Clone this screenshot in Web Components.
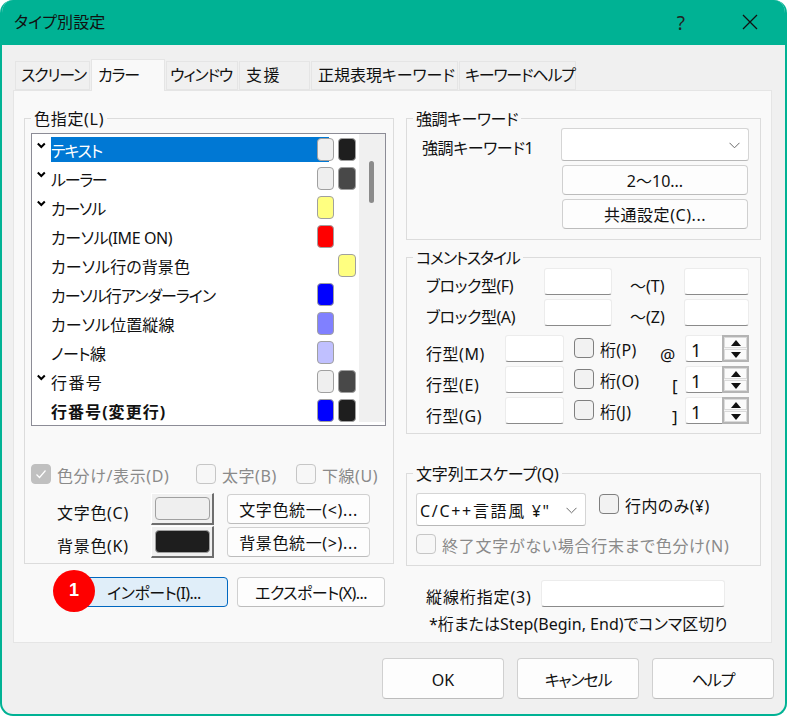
<!DOCTYPE html>
<html lang="ja">
<head>
<meta charset="utf-8">
<title>タイプ別設定</title>
<style>
  html, body { margin: 0; padding: 0; background: #fff; }
  body {
    font: 16px/20px "Noto Sans", "Noto Sans CJK JP", sans-serif;
    font-feature-settings: "palt";
    color: #111;
  }
</style>
</head>
<body>
<dlg-window heading="タイプ別設定">
  <tab-strip>
    <tab-item w="75" pad="5">スクリーン</tab-item>
    <tab-item w="74" pad="6" selected>カラー</tab-item>
    <tab-item w="72" pad="3">ウィンドウ</tab-item>
    <tab-item w="71" pad="6">支援</tab-item>
    <tab-item w="147" pad="6">正規表現キーワード</tab-item>
    <tab-item w="117" pad="5">キーワードヘルプ</tab-item>
  </tab-strip>
  <settings-page></settings-page>
  <push-button slot="footer" style="width:122px;height:41px">OK</push-button>
  <push-button slot="footer" style="width:122px;height:41px">キャンセル</push-button>
  <push-button slot="footer" style="width:122px;height:41px">ヘルプ</push-button>
</dlg-window>

<script>
// the original UI font has wide kanji and tight kana, so space each string to suit
function tuneSpacing(root) {
    const walker = document.createTreeWalker(root, NodeFilter.SHOW_TEXT);
    while (walker.nextNode()) {
        const text = walker.currentNode.nodeValue.trim();
        const parent = walker.currentNode.parentElement || root.host;
        if (!text || !parent || parent.tagName === 'STYLE') continue;
        const kanji = (text.match(/[\u4e00-\u9fff]/g) || []).length;
        const kana = (text.match(/[\u30a0-\u30ff]/g) || []).length;
        const extra = parseFloat(parent.getAttribute('ls') || 0);
        parent.style.letterSpacing = ((1.4 * kanji - 1.2 * kana) / text.length + extra).toFixed(2) + 'px';
    }
}

class Comp extends HTMLElement {
    constructor() {
        super();
        this.attachShadow({ mode: 'open' });
    }
    connectedCallback() {
        this.shadowRoot.innerHTML = this.render();
        tuneSpacing(this.shadowRoot);
        tuneSpacing(this);
    }
}

class DlgWindow extends Comp {
    render() {
        return `
        <style>
            :host {
                display: flex;
                flex-direction: column;
                box-sizing: border-box;
                width: 787px;
                height: 716px;
                background: #f0f0f0;
                border: solid #00b294;
                border-width: 0 2px 2px;
                border-radius: 13px;
                overflow: hidden;
            }
            .title {
                display: flex;
                align-items: center;
                height: 43px;
                padding: 0 0 2px 12px;
                flex: none;
                background: #00b294;
            }
            .title span { flex: 1; }
            .title b { font-weight: 400; font-size: 19px; margin-right: 57px; color: #222; padding-top: 2px; }
            .title svg { margin-right: 27px; }
            .body { padding: 14px 11px 0; }
            .footer {
                display: flex;
                justify-content: flex-end;
                gap: 13px;
                padding-top: 15px;
            }
        </style>
        <div class="title">
            <span>${this.getAttribute('heading')}</span>
            <b>?</b>
            <svg width="16" height="16" viewBox="0 0 16 16"><path d="M1 1L15 15M15 1L1 15" stroke="#111" stroke-width="1.3" fill="none"/></svg>
        </div>
        <div class="body">
            <slot></slot>
            <div class="footer"><slot name="footer"></slot></div>
        </div>`;
    }
}

class TabStrip extends Comp {
    render() {
        return `
        <style>
            :host { display: flex; align-items: flex-end; height: 32px; padding-left: 2px; gap: 1px; position: relative; z-index: 1; margin-bottom: -1px; }
        </style>
        <slot></slot>`;
    }
}

class TabItem extends Comp {
    render() {
        const selected = this.hasAttribute('selected');
        return `
        <style>
            :host {
                display: block;
                box-sizing: border-box;
                width: ${this.getAttribute('w')}px;
                height: ${selected ? 32 : 29}px;
                margin-bottom: ${selected ? 0 : 1}px;
                background: ${selected ? '#f9f9f9' : '#f0f0f0'};
                border: 1px solid #e5e5e5;
                border-bottom: ${selected ? 'none' : '1px solid #e5e5e5'};
                padding-left: ${this.getAttribute('pad')}px;
                line-height: ${selected ? 30 : 27}px;
                white-space: nowrap;
            }
        </style>
        <slot></slot>`;
    }
}

class GroupBox extends Comp {
    render() {
        return `
        <style>
            :host { display: block; }
            fieldset {
                margin: 0;
                padding: 0;
                border: 1px solid #dcdcdc;
                min-width: 0;
            }
            legend { margin-left: 6px; padding: 0 3px; line-height: 22px; height: 20px; white-space: nowrap; }
        </style>
        <fieldset>
            <legend>${this.getAttribute('legend')}</legend>
            <slot></slot>
        </fieldset>`;
    }
}

class PushButton extends Comp {
    render() {
        return `
        <style>
            :host {
                display: flex;
                align-items: center;
                justify-content: center;
                box-sizing: border-box;
                padding-top: 2px;
                background: #fdfdfd;
                border: 1px solid #d0d0d0;
                border-bottom-color: #bcbcbc;
                border-radius: 4px;
                white-space: nowrap;
            }
            :host([primary]) { background: #e0eef9; border-color: #0067c0; }
        </style>
        <slot></slot>`;
    }
}

class CheckBox extends Comp {
    render() {
        const checked = this.hasAttribute('checked');
        return `
        <style>
            :host { display: flex; align-items: flex-start; gap: 6px; white-space: nowrap; }
            :host([disabled]) { color: #8a8a8a; }
            .box {
                box-sizing: border-box;
                width: 20px;
                height: 20px;
                flex: none;
                border: 1px solid #7f7f7f;
                border-radius: 4px;
                background: #f2f2f2;
            }
            :host([disabled]) .box { border-color: #c6c6c6; background: #f7f7f7; }
            :host([disabled][checked]) .box { border-color: #c0c0c0; background: #c0c0c0; }
            svg { display: block; margin: 4px 0 0 4px; }
            .text { margin-top: 2px; }
        </style>
        <div class="box">${checked ? '<svg width="10" height="10" viewBox="0 0 10 10"><path d="M0.5 5.5L3.5 8.5L9.5 1.5" stroke="#fff" stroke-width="1.2" fill="none"/></svg>' : ''}</div>
        <div class="text"><slot></slot></div>`;
    }
}

class TextBox extends Comp {
    render() {
        return `
        <style>
            :host {
                display: block;
                box-sizing: border-box;
                height: 27px;
                background: #fff;
                border: 1px solid #ececec;
                border-bottom-color: #8a8a8a;
                border-radius: 3px;
            }
        </style>`;
    }
}

class ComboBox extends Comp {
    render() {
        return `
        <style>
            :host {
                display: flex;
                align-items: center;
                justify-content: space-between;
                box-sizing: border-box;
                height: 33px;
                padding: 2px 8px 0 3px;
                background: #fff;
                border: 1px solid #d5d5d5;
                border-bottom-color: #b8b8b8;
                border-radius: 3px;
                white-space: nowrap;
            }
            svg { flex: none; }
        </style>
        <div><slot></slot></div>
        <svg width="11" height="7" viewBox="0 0 11 7"><path d="M0.5 0.8L5.5 5.8L10.5 0.8" stroke="#6a6a6a" stroke-width="1" fill="none"/></svg>`;
    }
}

class SpinBox extends Comp {
    render() {
        return `
        <style>
            :host {
                display: flex;
                box-sizing: border-box;
                width: 64px;
                height: 27px;
                background: #fff;
                border: 1px solid #ececec;
                border-bottom-color: #8a8a8a;
                border-radius: 3px 0 0 3px;
                font-size: 18px;
                line-height: 29px;
            }
            .value { flex: 1; padding-left: 5px; }
            .arrows {
                box-sizing: border-box;
                width: 27px;
                margin: -1px -1px -1px 0;
                border: 2px solid #b4b4b4;
                background: #f4f4f4;
                display: flex;
                flex-direction: column;
                gap: 1px;
            }
            .arrows div {
                flex: 1;
                display: flex;
                align-items: center;
                justify-content: center;
                background: #fbfbfb;
                border: 1px solid #dadada;
            }
        </style>
        <div class="value"><slot></slot></div>
        <div class="arrows">
            <div><svg width="10" height="6" viewBox="0 0 10 6"><path d="M5 0L10 6H0Z" fill="#111"/></svg></div>
            <div><svg width="10" height="6" viewBox="0 0 10 6"><path d="M5 6L10 0H0Z" fill="#111"/></svg></div>
        </div>`;
    }
}

class ColorRow extends Comp {
    render() {
        const fg = this.getAttribute('fg');
        const bg = this.getAttribute('bg');
        const swatch = (c, col) => c ? `<i style="background:${c};grid-column:${col}"></i>` : '';
        return `
        <style>
            :host {
                display: grid;
                grid-template-columns: 19px 266px 12px 5px 4px 18px;
                height: 29px;
            }
            :host([bold]) { font-weight: 700; }
            svg { grid-column: 1; grid-row: 1; margin: 5px 0 0 5px; }
            .name { grid-column: 2 / 4; grid-row: 1; height: 25px; line-height: 28px; white-space: nowrap; }
            :host([selected]) .name { background: #0078d4; color: #fff; }
            i {
                grid-row: 1;
                box-sizing: border-box;
                height: 23px;
                margin-top: 1px;
                border: 1px solid #a0a0a0;
                border-radius: 4px;
            }
        </style>
        ${this.hasAttribute('checked') ? '<svg width="9" height="7" viewBox="0 0 9 7"><path d="M0.8 1.5L4.3 5L7.8 1.5" stroke="#000" stroke-width="2" fill="none"/></svg>' : ''}
        <div class="name"><slot></slot></div>
        ${swatch(fg, '3 / 5')}${swatch(bg, '6')}`;
    }
}

class ColorList extends Comp {
    render() {
        return `
        <style>
            :host {
                display: flex;
                box-sizing: border-box;
                width: 355px;
                height: 293px;
                background: #fff;
                border: 1px solid #8c8c96;
                overflow: hidden;
            }
            .rows { width: 327px; padding-top: 3px; }
            .track { width: 26px; background: #f0f0f0; margin-bottom: 3px; }
            .thumb { width: 5px; height: 42px; margin: 27px 0 0 10px; background: #8b8b8b; border-radius: 3px; }
        </style>
        <div class="rows"><slot></slot></div>
        <div class="track"><div class="thumb"></div></div>`;
    }
}

class ColorButton extends Comp {
    render() {
        return `
        <style>
            :host {
                display: block;
                box-sizing: border-box;
                width: 63px;
                height: 32px;
                padding: 3px 2px 3px 3px;
                background: #f0f0f0;
                border: solid;
                border-width: 1px 2px 2px 1px;
                border-color: #fff #6e6e6e #6e6e6e #fff;
            }
            div {
                height: 100%;
                box-sizing: border-box;
                border: 1px solid #a0a0a0;
                border-radius: 4px;
                background: ${this.getAttribute('color')};
            }
        </style>
        <div></div>`;
    }
}

class StepBadge extends Comp {
    render() {
        return `
        <style>
            :host {
                position: absolute;
                left: -27px;
                top: -7px;
                width: 42px;
                height: 42px;
                display: flex;
                align-items: center;
                justify-content: center;
                border-radius: 50%;
                background: #fe0000;
                color: #fff;
                font: 700 18px/1 "Liberation Sans", sans-serif;
                padding-bottom: 2px;
                box-sizing: border-box;
            }
        </style>
        <slot></slot>`;
    }
}

class ColorPanel extends Comp {
    render() {
        return `
        <style>
            .pad { padding: 5px 7px 5px 6px; }
            .flags { display: grid; grid-template-columns: 165px 100px auto; margin-top: 38px; height: 20px; }
            .pick {
                display: grid;
                grid-template-columns: 94px 63px 156px;
                row-gap: 1px;
                grid-auto-rows: 32px;
                align-items: center;
                margin: 9px 0 0 26px;
            }
            .pick span { padding-top: 8px; white-space: nowrap; }
            .pick push-button { height: 30px; margin-left: 13px; }
        </style>
        <group-box legend="色指定(L)">
            <div class="pad">
                <color-list>
                    <color-row selected checked fg="#efefef" bg="#1e1e1e">テキスト</color-row>
                    <color-row checked fg="#efefef" bg="#484848">ルーラー</color-row>
                    <color-row checked fg="#ffff80">カーソル</color-row>
                    <color-row fg="#ff0000">カーソル(IME ON)</color-row>
                    <color-row bg="#ffff80">カーソル行の背景色</color-row>
                    <color-row fg="#0000ff">カーソル行アンダーライン</color-row>
                    <color-row fg="#8080ff">カーソル位置縦線</color-row>
                    <color-row fg="#c0c0ff">ノート線</color-row>
                    <color-row checked fg="#efefef" bg="#484848">行番号</color-row>
                    <color-row bold fg="#0000ff" bg="#1e1e1e">行番号(変更行)</color-row>
                </color-list>
                <div class="flags">
                    <check-box disabled checked>色分け/表示(D)</check-box>
                    <check-box disabled>太字(B)</check-box>
                    <check-box disabled>下線(U)</check-box>
                </div>
                <div class="pick">
                    <span>文字色(C)</span>
                    <color-button color="#efefef"></color-button>
                    <push-button>文字色統一(&lt;)...</push-button>
                    <span>背景色(K)</span>
                    <color-button color="#1e1e1e"></color-button>
                    <push-button>背景色統一(&gt;)...</push-button>
                </div>
            </div>
        </group-box>`;
    }
}

class KeywordPanel extends Comp {
    render() {
        return `
        <style>
            .grid { display: grid; grid-template-columns: 139px 188px; padding: 0 0 10px 15px; row-gap: 4px; }
            span { padding-top: 10px; white-space: nowrap; }
            push-button { height: 30px; margin: 0 1px; grid-column: 2; }
        </style>
        <group-box legend="強調キーワード">
            <div class="grid">
                <span>強調キーワード1</span>
                <combo-box></combo-box>
                <push-button>2〜10...</push-button>
                <push-button>共通設定(C)...</push-button>
            </div>
        </group-box>`;
    }
}

class CommentPanel extends Comp {
    render() {
        return `
        <style>
            .block {
                display: grid;
                grid-template-columns: 118px 68px 18px 54px 65px;
                grid-auto-rows: 27px;
                row-gap: 4px;
                padding: 1px 0 0 19px;
            }
            .block span { line-height: 36px; white-space: nowrap; }
            .block .to { grid-column: 4; }
            .line {
                display: grid;
                grid-template-columns: 79px 59px 10px 86px 25px 64px;
                grid-auto-rows: 27px;
                row-gap: 4px;
                padding: 9px 0 9px 19px;
                align-items: start;
            }
            .line .name { line-height: 38px; white-space: nowrap; }
            .line text-box { grid-column: 2; }
            .line check-box { grid-column: 4; margin-top: 3px; }
            .line .mark { line-height: 40px; font-size: 17px; }
            .line .bracket { padding-left: 12px; }
            .line spin-box { grid-column: 6; }
        </style>
        <group-box legend="コメントスタイル">
            <div class="block">
                <span>ブロック型(F)</span><text-box></text-box><span class="to">〜(T)</span><text-box></text-box>
                <span>ブロック型(A)</span><text-box></text-box><span class="to">〜(Z)</span><text-box></text-box>
            </div>
            <div class="line">
                <span class="name">行型(M)</span><text-box></text-box><check-box>桁(P)</check-box><span class="mark">@</span><spin-box>1</spin-box>
                <span class="name">行型(E)</span><text-box></text-box><check-box>桁(O)</check-box><span class="mark bracket">[</span><spin-box>1</spin-box>
                <span class="name">行型(G)</span><text-box></text-box><check-box>桁(J)</check-box><span class="mark bracket">]</span><spin-box>1</spin-box>
            </div>
        </group-box>`;
    }
}

class EscapePanel extends Comp {
    render() {
        return `
        <style>
            .pad { padding: 10px 0 9px 9px; }
            .top { display: flex; gap: 13px; align-items: flex-start; }
            .top combo-box { width: 170px; }
            .top check-box { margin-top: 1px; }
            .bottom { margin-top: 8px; }
        </style>
        <group-box legend="文字列エスケープ(Q)">
            <div class="pad">
                <div class="top">
                    <combo-box ls="1.3">C/C++言語風 ¥"</combo-box>
                    <check-box>行内のみ(¥)</check-box>
                </div>
                <check-box class="bottom" disabled>終了文字がない場合行末まで色分け(N)</check-box>
            </div>
        </group-box>`;
    }
}

class SettingsPage extends Comp {
    render() {
        return `
        <style>
            :host {
                display: grid;
                grid-template-columns: 370px 355px;
                column-gap: 12px;
                box-sizing: border-box;
                width: 759px;
                height: 553px;
                padding: 17px 10px 0;
                background: #f9f9f9;
                border: 1px solid #e5e5e5;
            }
            .imports { display: flex; gap: 9px; margin: 13px 0 0 56px; }
            .imports push-button { height: 30px; width: 148px; }
            .wrap { position: relative; }
            .col { display: flex; flex-direction: column; }
            keyword-panel, comment-panel, escape-panel { display: block; }
            comment-panel { margin-top: 7px; }
            escape-panel { margin-top: 29px; }
            .ruler { display: flex; margin: 14px 0 0 20px; align-items: flex-start; }
            .ruler span { padding-top: 7px; width: 115px; flex: none; white-space: nowrap; }
            .ruler text-box { width: 184px; }
            .note { margin: 7px 0 0 23px; white-space: nowrap; }
        </style>
        <div class="col">
            <color-panel></color-panel>
            <div class="imports">
                <div class="wrap"><push-button primary>インポート(I)...</push-button><step-badge>1</step-badge></div>
                <push-button>エクスポート(X)...</push-button>
            </div>
        </div>
        <div class="col">
            <keyword-panel></keyword-panel>
            <comment-panel></comment-panel>
            <escape-panel></escape-panel>
            <div class="ruler"><span>縦線桁指定(3)</span><text-box></text-box></div>
            <div class="note">*桁またはStep(Begin, End)でコンマ区切り</div>
        </div>`;
    }
}

customElements.define('dlg-window', DlgWindow);
customElements.define('tab-strip', TabStrip);
customElements.define('tab-item', TabItem);
customElements.define('group-box', GroupBox);
customElements.define('push-button', PushButton);
customElements.define('check-box', CheckBox);
customElements.define('text-box', TextBox);
customElements.define('combo-box', ComboBox);
customElements.define('spin-box', SpinBox);
customElements.define('color-row', ColorRow);
customElements.define('color-list', ColorList);
customElements.define('color-button', ColorButton);
customElements.define('step-badge', StepBadge);
customElements.define('color-panel', ColorPanel);
customElements.define('keyword-panel', KeywordPanel);
customElements.define('comment-panel', CommentPanel);
customElements.define('escape-panel', EscapePanel);
customElements.define('settings-page', SettingsPage);
</script>
</body>
</html>
